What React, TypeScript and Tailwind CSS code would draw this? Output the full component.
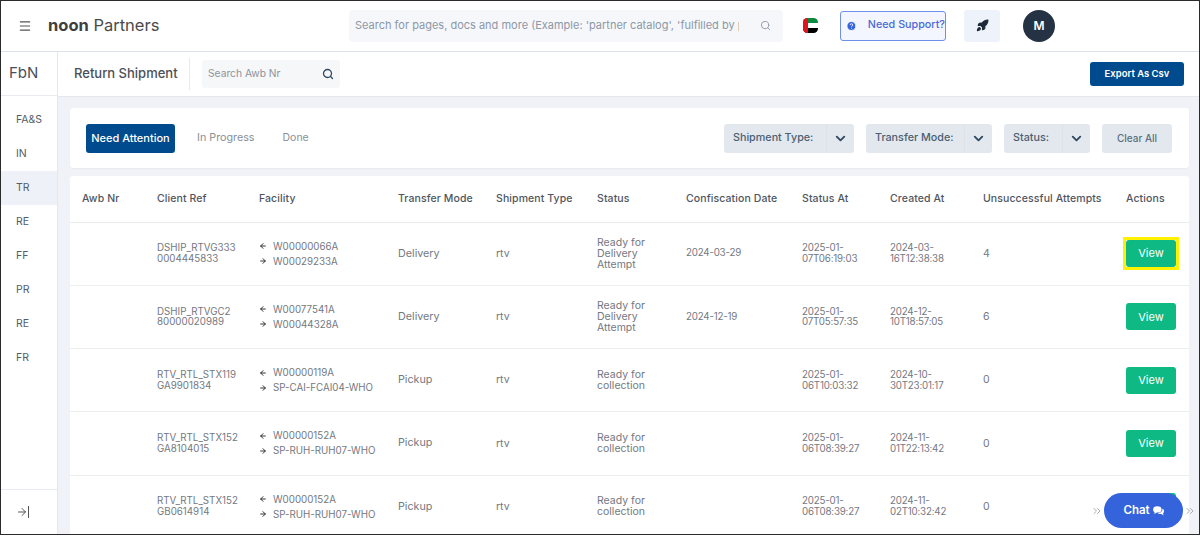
import { ArrowLeft, ArrowRight, ChevronDown, ChevronsRight, CircleHelp, Menu, Rocket, Search } from "lucide-react";

const font = { fontFamily: '"Inter", "Liberation Sans", sans-serif' };

const rows = [
  { ref: ["DSHIP_RTVG333", "0004445833"], from: "W00000066A", to: "W00029233A", mode: "Delivery", status: ["Ready for", "Delivery", "Attempt"], conf: "2024-03-29", at: ["2025-01-", "07T06:19:03"], created: ["2024-03-", "16T12:38:38"], tries: "4", mark: true },
  { ref: ["DSHIP_RTVGC2", "80000020989"], from: "W00077541A", to: "W00044328A", mode: "Delivery", status: ["Ready for", "Delivery", "Attempt"], conf: "2024-12-19", at: ["2025-01-", "07T05:57:35"], created: ["2024-12-", "10T18:57:05"], tries: "6" },
  { ref: ["RTV_RTL_STX119", "GA9901834"], from: "W00000119A", to: "SP-CAI-FCAI04-WHO", mode: "Pickup", status: ["Ready for", "collection"], conf: "", at: ["2025-01-", "06T10:03:32"], created: ["2024-10-", "30T23:01:17"], tries: "0" },
  { ref: ["RTV_RTL_STX152", "GA8104015"], from: "W00000152A", to: "SP-RUH-RUH07-WHO", mode: "Pickup", status: ["Ready for", "collection"], conf: "", at: ["2025-01-", "06T08:39:27"], created: ["2024-11-", "01T22:13:42"], tries: "0" },
  { ref: ["RTV_RTL_STX152", "GB0614914"], from: "W00000152A", to: "SP-RUH-RUH07-WHO", mode: "Pickup", status: ["Ready for", "collection"], conf: "", at: ["2025-01-", "06T08:39:27"], created: ["2024-11-", "02T10:32:42"], tries: "0" },
];

const heads = ["Awb Nr", "Client Ref", "Facility", "Transfer Mode", "Shipment Type", "Status", "Confiscation Date", "Status At", "Created At", "Unsuccessful Attempts", "Actions"];
const navItems = ["FA&S", "IN", "TR", "RE", "FF", "PR", "RE", "FR"];

function Lines({ items, className }: { items: string[]; className?: string }) {
  return (
    <div className={`pt-[1px] leading-[10.75px] ${className ?? ""}`}>
      {items.map((t) => (
        <div key={t} className="whitespace-nowrap">{t}</div>
      ))}
    </div>
  );
}

function Filter({ label, width }: { label: string; width: string }) {
  return (
    <div className={`flex h-[29px] items-center rounded-[3px] bg-[#e3e8ee] pl-[9px] text-[10.75px] font-medium text-[#4a6073] ${width}`}>
      <span className="flex-1 whitespace-nowrap pt-[1px]">{label}</span>
      <span className="flex h-full w-[28px] items-center justify-center border-l border-[#dde2e8]">
        <ChevronDown size={15} strokeWidth={3} className="text-[#2f4a62]" />
      </span>
    </div>
  );
}

function UaeFlag() {
  return (
    <svg width="15" height="15" viewBox="0 0 15 15">
      <defs>
        <clipPath id="flag-clip">
          <rect width="15" height="15" rx="4.5" />
        </clipPath>
      </defs>
      <g clipPath="url(#flag-clip)">
        <rect width="15" height="5" fill="#0a8a3f" />
        <rect y="5" width="15" height="5" fill="#fff" />
        <rect y="10" width="15" height="5" fill="#000" />
        <rect width="5" height="15" fill="#e0141c" />
      </g>
    </svg>
  );
}

function ViewButton({ mark }: { mark?: boolean }) {
  const btn = <button className="h-[27px] w-[50px] rounded-[3px] bg-[#0fb984] text-[11px] text-white">View</button>;
  if (!mark) return <div>{btn}</div>;
  return <div className="-m-[3px] inline-flex w-fit border-[3px] border-[#fff200]">{btn}</div>;
}

export default function App() {
  return (
    <div style={font} className="h-[538px] w-[1203px] overflow-hidden bg-white">
      <div className="relative flex h-[535px] w-[1200px] flex-col overflow-hidden border-[1.5px] border-[#2b2b2b]">
        <header className="flex h-[51px] shrink-0 items-center border-b border-[#dce2e8] bg-white pb-[1px]">
          <Menu size={14} className="ml-[17px] text-[#555]" />
          <div className="ml-[16px] w-[301px] whitespace-nowrap text-[16.5px] text-[#4a4a4a]">
            <span className="font-bold text-[#3f3f3f]">noon</span> Partners
          </div>
          <div className="flex h-[32px] w-[434px] items-center justify-between rounded-[4px] bg-[#f5f7fb] pl-[6px] pr-[12px] text-[11px] text-[#8d97a5]">
            <span className="w-[384px] shrink-0 overflow-hidden whitespace-nowrap">Search for pages, docs and more (Example: 'partner catalog', 'fulfilled by p</span>
            <Search size={11} className="shrink-0 text-[#8d97a5]" />
          </div>
          <div className="ml-[20px]">
            <UaeFlag />
          </div>
          <div className="ml-[22px] flex h-[30px] w-[106px] items-center rounded-[3px] border border-[#6f8fe8] bg-[#f3f6fe] pl-[5px] text-[10.75px] font-medium text-[#4a6bd6]">
            <CircleHelp size={12} fill="#3563e0" stroke="#fff" />
            <span className="ml-[11px] whitespace-nowrap">Need Support?</span>
          </div>
          <div className="ml-[18px] flex h-[32px] w-[36px] items-center justify-center rounded-[3px] bg-[#eef2fa]">
            <Rocket size={13} fill="#1f2937" className="text-[#1f2937]" />
          </div>
          <div className="ml-[23px] flex h-[32px] w-[32px] items-center justify-center rounded-full bg-[#253244] text-[12px] font-semibold text-white">M</div>
        </header>

        <div className="flex min-h-0 flex-1">
          <aside className="flex w-[57px] shrink-0 flex-col border-r border-[#e4e8ee] bg-white">
            <div className="flex h-[44px] shrink-0 items-center border-b border-[#e8ebf0] pl-[8px] text-[15px] text-[#4a4f57]">FbN</div>
            <nav className="flex-1 pt-[7px]">
              {navItems.map((item, i) => (
                <div key={i} className={`flex h-[34px] items-center pl-[15px] text-[10.5px] text-[#555c66] ${item === "TR" ? "bg-[#eef1f8]" : ""}`}>
                  {item}
                </div>
              ))}
            </nav>
            <div className="flex h-[45px] shrink-0 items-center border-t border-[#e8ebf0] pl-[15px]">
              <ArrowRight size={12} className="text-[#555]" />
              <span className="h-[12px] w-px bg-[#555]" />
            </div>
          </aside>

          <main className="flex min-w-0 flex-1 flex-col bg-[#f0f2f8]">
            <div className="flex h-[45px] shrink-0 items-center border-b border-[#e4e7ec] bg-white pr-[15px]">
              <div className="ml-[16px] w-[116px] whitespace-nowrap border-r border-[#e6e9ee] py-[6px] text-[13px] font-medium text-[#4a4f57]">Return Shipment</div>
              <div className="ml-[12px] flex h-[28px] w-[138px] items-center justify-between rounded-[3px] bg-[#f6f7f9] pl-[6px] pr-[6px] text-[10.25px] text-[#8d939c]">
                Search Awb Nr
                <Search size={12} strokeWidth={2.6} className="text-[#2f4a62]" />
              </div>
              <button className="ml-auto h-[24px] w-[94px] rounded-[3px] bg-[#004b8d] text-[9.5px] font-semibold text-white">Export As Csv</button>
            </div>

            <div className="flex min-h-0 flex-1 flex-col gap-[8px] pl-[12px] pr-[10px] pt-[11px]">
              <section className="flex h-[60px] shrink-0 items-center rounded-[3px] bg-white pl-[16px] pr-[17px] shadow-[0_1px_2px_rgba(0,0,0,0.04)]">
                <div className="flex h-[29px] w-[89px] items-center justify-center whitespace-nowrap rounded-[3px] bg-[#004b8d] text-[11px] font-medium text-white">Need Attention</div>
                <div className="ml-[22px] whitespace-nowrap text-[10.75px] text-[#8a8f96]">In Progress</div>
                <div className="ml-[28px] text-[10.5px] text-[#8a8f96]">Done</div>
                <div className="ml-auto flex items-center gap-[12px]">
                  <Filter label="Shipment Type:" width="w-[130px]" />
                  <Filter label="Transfer Mode:" width="w-[126px]" />
                  <Filter label="Status:" width="w-[86px]" />
                  <button className="h-[29px] w-[70px] rounded-[3px] bg-[#e3e8ee] text-[10px] font-medium text-[#5a6f80]">Clear All</button>
                </div>
              </section>

              <section className="min-h-0 flex-1 overflow-hidden rounded-t-[3px] bg-white">
                <div className="grid h-[46.5px] grid-cols-[75px_102px_139px_98px_101px_89px_116px_88px_93px_143px_1fr] items-center border-b border-[#e9ebef] pl-[12px] text-[10.5px] font-medium tracking-[0.1px] text-[#4f5660]">
                  {heads.map((h) => (
                    <div key={h} className="whitespace-nowrap">{h}</div>
                  ))}
                </div>
                {rows.map((r, i) => (
                  <div key={i} className="grid h-[63.25px] grid-cols-[75px_102px_139px_98px_101px_89px_116px_88px_93px_143px_1fr] items-center border-b border-[#eceef2] pl-[12px] text-[10.5px] text-[#74787f]">
                    <div />
                    <Lines items={r.ref} className="text-[9.75px]" />
                    <div className="flex flex-col gap-[2px] whitespace-nowrap text-[9.75px] leading-[13px]">
                      <div className="flex items-center gap-[6px]">
                        <ArrowLeft size={8} strokeWidth={3} className="text-[#333]" />
                        {r.from}
                      </div>
                      <div className="flex items-center gap-[6px]">
                        <ArrowRight size={8} strokeWidth={3} className="text-[#333]" />
                        {r.to}
                      </div>
                    </div>
                    <div className="text-[10.75px]">{r.mode}</div>
                    <div>rtv</div>
                    <Lines items={r.status} />
                    <div className="text-[9.75px] tracking-[-0.2px]">{r.conf}</div>
                    <Lines items={r.at} className="text-[9.75px] tracking-[-0.2px]" />
                    <Lines items={r.created} className="text-[9.75px] tracking-[-0.2px]" />
                    <div>{r.tries}</div>
                    <ViewButton mark={r.mark} />
                  </div>
                ))}
              </section>
            </div>
          </main>
        </div>

        <div className="absolute bottom-[6px] right-[3px] flex items-center gap-[1px] text-[#a8adb5]">
          <ChevronsRight size={12} />
          <div className="flex h-[35px] w-[79px] items-center justify-center gap-[3px] rounded-full bg-[#3563dc] text-[11.5px] font-semibold text-white">
            Chat
            <svg width="11" height="10" viewBox="0 0 11 10" fill="#fff">
              <ellipse cx="4.3" cy="3.4" rx="4.2" ry="3.2" />
              <path d="M2 5.5 1 8l3-1.5z" />
              <path d="M9.4 2.6c1 .6 1.6 1.5 1.6 2.6 0 .9-.4 1.6-1 2.1l.6 1.9-2.4-1.2c-.8.2-2.6.1-3.5-.9 2.4 0 5.2-1.4 4.7-4.5z" />
            </svg>
          </div>
          <ChevronsRight size={12} />
        </div>
      </div>
    </div>
  );
}
